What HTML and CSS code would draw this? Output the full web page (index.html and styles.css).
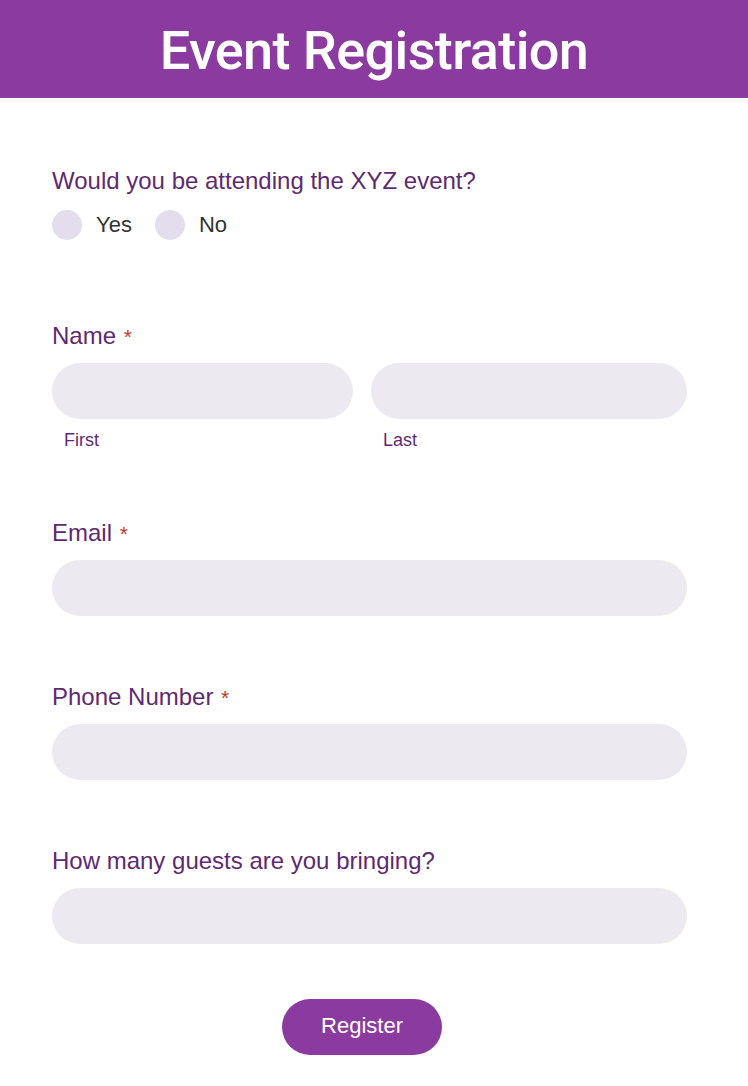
FILE: index.html
```html
<!DOCTYPE html>
<html lang="en">
<head>
<meta charset="utf-8">
<title>Event Registration</title>
<link rel="stylesheet" href="styles.css">
</head>
<body>
<header class="banner">
  <h1 class="banner-title">Event Registration</h1>
</header>
<form class="form">
  <section class="group group-question">
    <div class="label">Would you be attending the XYZ event?</div>
    <div class="radios">
      <label class="radio"><span class="dot"></span><span class="radio-text">Yes</span></label>
      <label class="radio"><span class="dot"></span><span class="radio-text">No</span></label>
    </div>
  </section>
  <section class="group group-name">
    <div class="label">Name <span class="req">*</span></div>
    <div class="name-row">
      <div class="name-col">
        <div class="input"></div>
        <div class="sublabel">First</div>
      </div>
      <div class="name-col">
        <div class="input"></div>
        <div class="sublabel">Last</div>
      </div>
    </div>
  </section>
  <section class="group">
    <div class="label">Email <span class="req">*</span></div>
    <div class="input"></div>
  </section>
  <section class="group">
    <div class="label">Phone Number <span class="req">*</span></div>
    <div class="input"></div>
  </section>
  <section class="group group-last">
    <div class="label">How many guests are you bringing?</div>
    <div class="input"></div>
  </section>
  <div class="actions">
    <button type="button" class="btn">Register</button>
  </div>
</form>
</body>
</html>
```

FILE: styles.css
```css
html, body {
  margin: 0;
  padding: 0;
  background: #ffffff;
}
body {
  font-family: "Liberation Sans", Arial, sans-serif;
}
.banner {
  background: #8b3ba0;
  height: 98px;
  display: flex;
  align-items: center;
  justify-content: center;
}
.banner-title {
  margin: 0;
  font-family: Roboto, "Liberation Sans", sans-serif;
  font-weight: 500;
  font-size: 54px;
  line-height: 1;
  color: #ffffff;
  padding-top: 4px;
  letter-spacing: -0.6px;
}
.form {
  padding: 70px 61px 0 52px;
}
.group {
  margin-bottom: 68px;
}
.group-question {
  margin-bottom: 83px;
}
.group-name {
  margin-bottom: 70px;
}
.group-last {
  margin-bottom: 55px;
}
.label {
  font-size: 24px;
  line-height: 26px;
  color: #5e2a72;
  margin-bottom: 14px;
}
.group-question .label {
  margin-bottom: 16px;
}
.req {
  color: #c0392b;
  font-size: 21px;
  line-height: 0;
  margin-left: 1px;
}
.radios {
  display: flex;
  align-items: center;
  gap: 23px;
}
.radio {
  display: flex;
  align-items: center;
  gap: 14px;
}
.dot {
  width: 30px;
  height: 30px;
  border-radius: 50%;
  background: #e3dded;
}
.radio-text {
  font-size: 22px;
  line-height: 30px;
  color: #333333;
}
.input {
  height: 56px;
  border-radius: 28px;
  background: #ece9f1;
}
.name-row {
  display: grid;
  grid-template-columns: 301px 1fr;
  gap: 18px;
}
.sublabel {
  font-size: 18px;
  line-height: 20px;
  color: #5e2a72;
  margin-top: 11px;
  padding-left: 12px;
}
.actions {
  display: flex;
  justify-content: center;
  padding-right: 15px;
}
.btn {
  width: 160px;
  height: 56px;
  border: none;
  border-radius: 28px;
  background: #8b3ba0;
  color: #ffffff;
  font-family: "Liberation Sans", Arial, sans-serif;
  font-size: 22px;
  padding: 0 0 2px;
}
```
